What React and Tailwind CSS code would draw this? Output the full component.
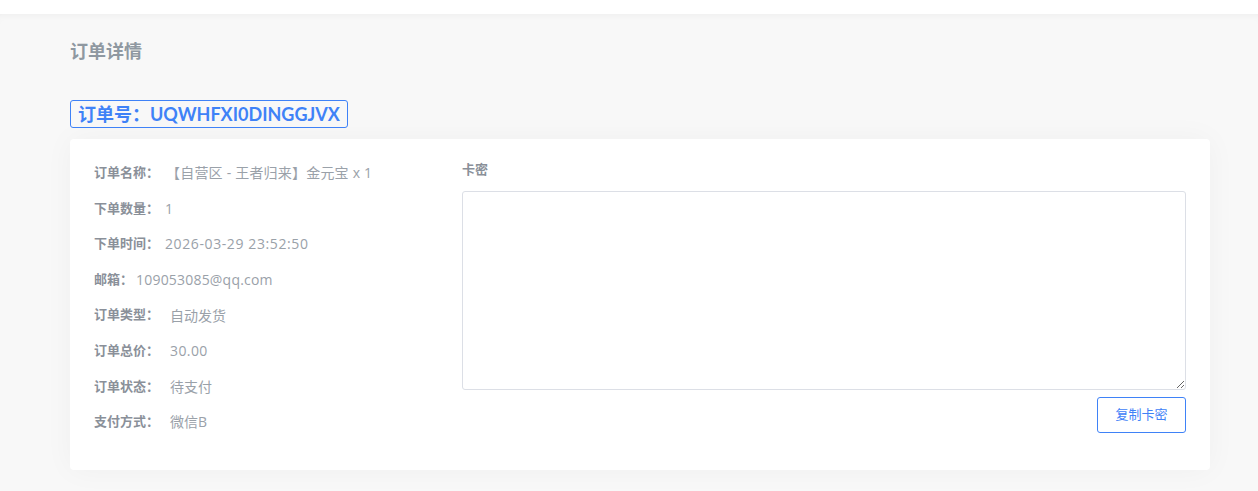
import React from "react";

const font = { fontFamily: 'Lato, "Noto Sans CJK SC", sans-serif' };
const valFont = { fontFamily: '"Open Sans", "Noto Sans CJK SC", sans-serif' };

const rows = [
  ["订单名称：", "【自营区 - 王者归来】金元宝 x 1", "ml-[7px] tracking-[0.2px]"],
  ["下单数量：", "1", "ml-[6px]"],
  ["下单时间：", "2026-03-29 23:52:50", "ml-[6px] tracking-[0.6px]"],
  ["邮箱：", "109053085@qq.com", "ml-[3px] tracking-[0.2px]"],
  ["订单类型：", "自动发货", "ml-[11px]"],
  ["订单总价：", "30.00", "ml-[11px] tracking-[0.4px]"],
  ["订单状态：", "待支付", "ml-[11px]"],
  ["支付方式：", "微信B", "ml-[11px]"],
];

export default function App() {
  return (
    <div className="w-[1258px] h-[491px] bg-white overflow-hidden" style={font}>
      <div className="h-[14px] bg-white" />
      <div className="h-[477px] bg-[#f8f8f8] shadow-[inset_0_6px_8px_-6px_rgba(0,0,0,0.06)] px-[70px] pr-[48px]">
        <div className="pt-[27px] text-[18px] leading-[20px] font-bold text-[#8f98a1]">订单详情</div>
        <div className="mt-[39px] inline-flex items-center h-[28px] border border-[#3f82f7] rounded-[3px] px-[7px] text-[18px] font-bold text-[#3f82f7]">
          订单号：UQWHFXI0DINGGJVX
        </div>
        <div className="mt-[11px] bg-white rounded-[4px] shadow-[0_0_30px_rgba(0,0,0,0.04)] h-[331px] flex px-[24px] pt-[16px]">
          <div className="w-[368px] flex flex-col">
            {rows.map(([k, v, ml]) => (
              <div key={k} className="h-[35.6px] flex items-center">
                <span className="text-[13px] font-bold text-[#8a9099]">{k}</span>
                <span className={`text-[14px] text-[#9aa1a9] ${ml}`} style={valFont}>{v}</span>
              </div>
            ))}
          </div>
          <div className="flex-1 flex flex-col">
            <div className="h-[28px] pt-[4px] text-[13px] font-bold text-[#8a9099] leading-[20px]">卡密</div>
            <textarea className="mt-[8px] h-[199px] w-full border border-[#dcdfe6] rounded-[3px] resize-y outline-none" />
            <div className="flex justify-end mt-[7px]">
              <button className="w-[89px] h-[36px] border border-[#3f82f7] rounded-[3px] text-[13px] text-[#3f82f7] bg-white">
                复制卡密
              </button>
            </div>
          </div>
        </div>
      </div>
    </div>
  );
}
